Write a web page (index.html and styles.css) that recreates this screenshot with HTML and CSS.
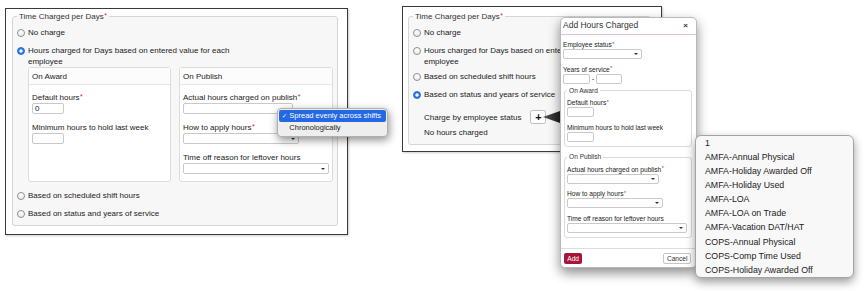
FILE: index.html
```html
<!DOCTYPE html>
<html lang="en">
<head>
    <meta charset="UTF-8">
    <meta name="viewport" content="width=device-width, initial-scale=1.0">
    <title>Time Charged per Days</title>
    <link rel="stylesheet" href="styles.css">
</head>
<body>
<div class="desk">

    <!-- first shot: hours charged by entered value -->
    <div class="shot shot-left">
        <fieldset class="group">
            <legend>Time Charged per Days<span class="req">*</span></legend>
            <div class="opt"><span class="radio"></span><span>No charge</span></div>
            <div class="opt">
                <span class="radio on"></span>
                <div class="opt-body">
                    <span class="opt-text">Hours charged for Days based on entered value for each employee</span>
                    <div class="panels">
                        <div class="panel">
                            <div class="panel-head">On Award</div>
                            <div class="panel-body">
                                <div class="field">
                                    <label>Default hours<span class="req">*</span></label>
                                    <div class="box w32">0</div>
                                </div>
                                <div class="field">
                                    <label>Minimum hours to hold last week</label>
                                    <div class="box w32"></div>
                                </div>
                            </div>
                        </div>
                        <div class="panel">
                            <div class="panel-head">On Publish</div>
                            <div class="panel-body">
                                <div class="field">
                                    <label>Actual hours charged on publish<span class="req">*</span></label>
                                    <div class="box w110"></div>
                                </div>
                                <div class="field">
                                    <label>How to apply hours<span class="req">*</span></label>
                                    <div class="box sel w116"></div>
                                </div>
                                <div class="field">
                                    <label>Time off reason for leftover hours</label>
                                    <div class="box sel"></div>
                                </div>
                            </div>
                        </div>
                    </div>
                </div>
            </div>
            <div class="opt"><span class="radio"></span><span>Based on scheduled shift hours</span></div>
            <div class="opt"><span class="radio"></span><span>Based on status and years of service</span></div>
        </fieldset>

        <div class="menu">
            <div class="menu-item active"><span class="check">✓</span>Spread evenly across shifts</div>
            <div class="menu-item"><span class="check"></span>Chronologically</div>
        </div>
    </div>

    <!-- second shot: by status and years of service -->
    <div class="shot shot-right">
        <fieldset class="group">
            <legend>Time Charged per Days<span class="req">*</span></legend>
            <div class="opt"><span class="radio"></span><span>No charge</span></div>
            <div class="opt opt-tight">
                <span class="radio"></span>
                <div class="opt-body">
                    <span class="opt-text">Hours charged for Days based on entered value for each employee</span>
                </div>
            </div>
            <div class="opt"><span class="radio"></span><span>Based on scheduled shift hours</span></div>
            <div class="opt">
                <span class="radio on"></span>
                <div class="opt-body">
                    <span class="opt-text">Based on status and years of service</span>
                    <div class="charge">
                        <span>Charge by employee status</span>
                        <span class="plus">+</span>
                    </div>
                    <div class="none">No hours charged</div>
                </div>
            </div>
        </fieldset>
    </div>

    <svg class="pointer" width="19" height="14" viewBox="0 0 19 14">
        <defs>
            <linearGradient id="pg" x1="0" x2="1" y1="0" y2="0">
                <stop offset="0" stop-color="#555"/>
                <stop offset="1" stop-color="#1e1e1e"/>
            </linearGradient>
        </defs>
        <polygon points="1,7 18,1 18,13" fill="url(#pg)"/>
    </svg>

    <div class="modal">
        <div class="modal-head">
            <span>Add Hours Charged</span>
            <span class="close">×</span>
        </div>
        <div class="modal-body">
            <div class="mfield">
                <label>Employee status<span class="req">*</span></label>
                <div class="mbox sel mw79"></div>
            </div>
            <div class="mfield years">
                <label>Years of service<span class="req">*</span></label>
                <div class="range">
                    <div class="mbox mw27"></div>
                    <span>-</span>
                    <div class="mbox mw26"></div>
                </div>
            </div>
            <fieldset class="mset">
                <legend>On Award</legend>
                <div class="mfield">
                    <label>Default hours<span class="req">*</span></label>
                    <div class="mbox mw27"></div>
                </div>
                <div class="mfield">
                    <label>Minimum hours to hold last week</label>
                    <div class="mbox mw27"></div>
                </div>
            </fieldset>
            <fieldset class="mset">
                <legend>On Publish</legend>
                <div class="mfield">
                    <label>Actual hours charged on publish<span class="req">*</span></label>
                    <div class="mbox sel mw92"></div>
                </div>
                <div class="mfield">
                    <label>How to apply hours<span class="req">*</span></label>
                    <div class="mbox sel mw96"></div>
                </div>
                <div class="mfield">
                    <label>Time off reason for leftover hours</label>
                    <div class="mbox sel mw120"></div>
                </div>
            </fieldset>
        </div>
        <div class="modal-foot">
            <span class="btn btn-add">Add</span>
            <span class="btn btn-cancel">Cancel</span>
        </div>
    </div>

    <div class="list">
        <div>1</div>
        <div>AMFA-Annual Physical</div>
        <div>AMFA-Holiday Awarded Off</div>
        <div>AMFA-Holiday Used</div>
        <div>AMFA-LOA</div>
        <div>AMFA-LOA on Trade</div>
        <div>AMFA-Vacation DAT/HAT</div>
        <div>COPS-Annual Physical</div>
        <div>COPS-Comp Time Used</div>
        <div>COPS-Holiday Awarded Off</div>
    </div>

</div>
</body>
</html>
```

FILE: styles.css
```css
* {
    box-sizing: border-box;
}

body {
    margin: 0;
    background: #fff;
    font-family: "Liberation Sans", Arial, sans-serif;
    color: #222;
}

.desk {
    position: relative;
    width: 868px;
    height: 291px;
    display: flex;
    align-items: flex-start;
    overflow: hidden;
}

/* screenshot frames */
.shot {
    position: relative;
    background: #fff;
    border: 1px solid #3a3a3a;
    box-shadow: 1px 1px 2px rgba(0, 0, 0, 0.2);
    font-size: 8px;
    line-height: 11px;
}

.shot-left {
    width: 343px;
    margin: 8px 0 0 5px;
    padding: 2px 9px 8px 6px;
}

.shot-right {
    width: 260px;
    margin: 6px 0 0 54px;
    padding: 4px 10px 6px 5px;
}

.group {
    margin: 0;
    min-width: 0;
    padding: 5px 4px 6px;
    border: 1px solid #d6d6d6;
    border-radius: 3px;
    background: #f7f7f7;
}

.group legend {
    padding: 0 2px;
    color: #333;
}

.req {
    color: #d8202f;
    font-size: 7px;
    margin-left: 0.5px;
    vertical-align: 1.5px;
    line-height: 0;
}

.opt {
    display: flex;
    align-items: flex-start;
    gap: 3px;
    margin-bottom: 7px;
}

.opt:last-child {
    margin-bottom: 0;
}

.opt-tight {
    margin-bottom: 4px;
}

.radio {
    flex: none;
    width: 8px;
    height: 8px;
    margin-top: 1.5px;
    border: 1px solid #8e8e8e;
    border-radius: 50%;
    background: linear-gradient(#fff, #ececec);
}

.radio.on {
    border-color: #1f6ae0;
    background: radial-gradient(circle, #fff 0 1.3px, #2a7bf0 1.9px);
}

.opt-body {
    flex: 1;
    min-width: 0;
}

.opt-text {
    display: block;
    max-width: 205px;
}

/* award / publish panels */
.panels {
    display: grid;
    grid-template-columns: 143px 1fr;
    gap: 8px;
    margin-bottom: 1px;
}

.panel {
    border: 1px solid #dcdcdc;
    border-radius: 3px;
    background: #fff;
}

.panel-head {
    padding: 2.5px 3px;
    border-bottom: 1px solid #e6e6e6;
    background: #fcfcfc;
}

.panel-body {
    padding: 7px 3px 7px;
}

.field {
    margin-bottom: 8px;
}

.field:last-child {
    margin-bottom: 0;
}

.field label {
    display: block;
}

.box {
    display: flex;
    align-items: center;
    height: 11px;
    padding: 0 2px;
    border: 1px solid #c9c9c9;
    border-radius: 2px;
    background: #fff;
}

.sel {
    justify-content: flex-end;
    padding-right: 3px;
}

.sel::after {
    content: "";
    border-left: 2px solid transparent;
    border-right: 2px solid transparent;
    border-top: 2.5px solid #333;
}

.w32 { width: 32px; }
.w110 { width: 110px; }
.w116 { width: 116px; }

/* popup menu */
.menu {
    position: absolute;
    left: 271px;
    top: 99px;
    width: 111px;
    padding: 1px 1.3px;
    background: #eeeeee;
    border: 1px solid #b0b0b0;
    border-radius: 4px;
    box-shadow: 1px 3px 9px rgba(0, 0, 0, 0.45);
    font-size: 7.5px;
    line-height: 12.3px;
}

.menu-item {
    display: flex;
    padding-left: 2.5px;
    border-radius: 2px;
    color: #222;
}

.menu-item.active {
    background: #2468e4;
    color: #fff;
}

.check {
    flex: none;
    width: 7.5px;
    font-family: "DejaVu Sans", sans-serif;
    font-size: 6.5px;
}

/* status row */
.charge {
    display: flex;
    align-items: center;
    gap: 9px;
    margin-top: 10px;
}

.plus {
    display: flex;
    align-items: center;
    justify-content: center;
    width: 16px;
    height: 14px;
    border: 1px solid #bdbdbd;
    border-radius: 2.5px;
    background: #fff;
    font-weight: bold;
    font-size: 11px;
    color: #111;
}

.none {
    margin-top: 3px;
}

.pointer {
    position: absolute;
    left: 542px;
    top: 110px;
}

/* modal */
.modal {
    position: absolute;
    left: 560px;
    top: 17.3px;
    width: 137px;
    background: #fff;
    border: 1px solid #b9b9b9;
    border-radius: 5px;
    box-shadow: 0 5px 12px rgba(0, 0, 0, 0.45);
    font-size: 6.6px;
    line-height: 8px;
    color: #222;
}

.modal-head {
    display: flex;
    justify-content: space-between;
    align-items: center;
    padding: 2px 8px 3px 2px;
    border-bottom: 1px solid #e3c4cb;
    font-size: 8.5px;
    line-height: 11px;
    color: #333;
}

.close {
    font-weight: bold;
    font-size: 8px;
}

.modal-body {
    padding: 6px 4px 10.5px 2px;
}

.modal .req {
    font-size: 5.5px;
}

.mfield {
    margin-bottom: 6.5px;
}

.mfield:last-child {
    margin-bottom: 0;
}

.mfield label {
    display: block;
}

.years {
    margin-bottom: 3px;
}

.range {
    display: flex;
    align-items: center;
    gap: 2px;
}

.mbox {
    display: flex;
    align-items: center;
    height: 10px;
    border: 1px solid #c9c9c9;
    border-radius: 2px;
    background: #fff;
}

.mw26 { width: 26px; }
.mw27 { width: 27px; }
.mw79 { width: 79px; }
.mw92 { width: 92px; }
.mw96 { width: 96px; }
.mw120 { width: 120px; }

.mset {
    margin: 0 0 0 1px;
    min-width: 0;
    padding: 4.6px 2px 4px;
    border: 1px solid #dadada;
    border-radius: 3px;
}

.mset + .mset {
    margin-top: 6.5px;
}

.mset legend {
    padding: 0 2px;
    color: #333;
}

.modal-foot {
    display: flex;
    justify-content: space-between;
    padding: 3.4px 5px 3px 3px;
    border-top: 1px solid #dddddd;
}

.btn {
    display: flex;
    align-items: center;
    justify-content: center;
    height: 11.6px;
    border-radius: 2px;
}

.btn-add {
    width: 18.3px;
    background: #a5173a;
    color: #fff;
}

.btn-cancel {
    width: 27.7px;
    border: 1px solid #c5c5c5;
    background: #fff;
    color: #333;
}

/* open select list */
.list {
    position: absolute;
    left: 695px;
    top: 135px;
    width: 159px;
    padding-left: 9px;
    background: #f8f8f8;
    border: 1px solid #a3a3a3;
    border-radius: 6px;
    box-shadow: 0 4px 10px rgba(0, 0, 0, 0.4);
    font-size: 8.8px;
    line-height: 14.08px;
    color: #222;
    overflow: hidden;
}
```
